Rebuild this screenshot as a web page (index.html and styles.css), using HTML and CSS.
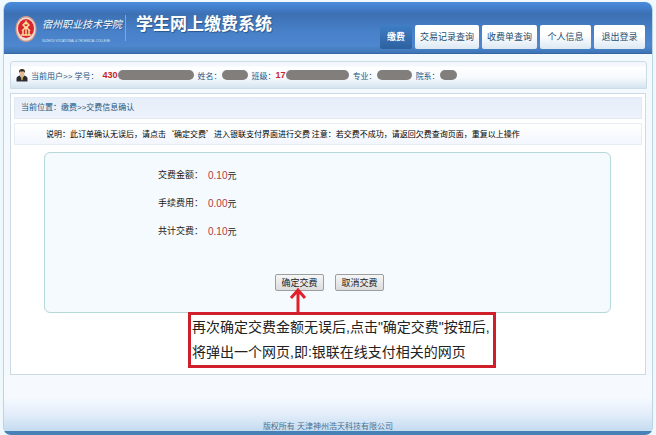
FILE: index.html
```html
<!DOCTYPE html>
<html lang="zh-CN">
<head>
    <meta charset="UTF-8">
    <meta name="viewport" content="width=device-width, initial-scale=1.0">
    <title>学生网上缴费系统</title>
    <link rel="stylesheet" href="styles.css">
</head>
<body>
    <div class="shell">
        <header class="header">
            <svg class="logo" viewBox="0 0 44 54" aria-hidden="true">
                <ellipse cx="22" cy="27" rx="21" ry="26" fill="#cf9a8c"/>
                <ellipse cx="22" cy="27" rx="19" ry="23" fill="#f0dcd2"/>
                <ellipse cx="22" cy="26" rx="16" ry="19" fill="#d9262c"/>
                <path d="M22 10v8M15 20l7-7 7 7M17 19l5 8 5-8M14 31l8-8 8 8M22 24v14M16 29v9M28 29v9M11 39h22" fill="none" stroke="#fbdc9a" stroke-width="3"/>
            </svg>
            <div class="school">
                <span class="school-name">宿州职业技术学院</span>
                <span class="school-en">SUZHOU VOCATIONAL &amp; TECHNICAL COLLEGE</span>
            </div>
            <h1>学生网上缴费系统</h1>
            <nav class="nav">
                <a class="active" href="#">缴费</a>
                <a href="#">交易记录查询</a>
                <a href="#">收费单查询</a>
                <a href="#">个人信息</a>
                <a href="#">退出登录</a>
            </nav>
        </header>

        <div class="userbar">
            <svg class="avatar" viewBox="0 0 24 26" aria-hidden="true">
                <path d="M1 25v-6q0-4 7-6h8q7 2 7 6v6z" fill="#2b2b30"/>
                <path d="M8 13l4 9 4-9z" fill="#fff"/>
                <path d="M11 14h2l1 7-2 2-2-2z" fill="#b2902e"/>
                <ellipse cx="12" cy="8" rx="5" ry="6" fill="#e3b98d"/>
                <path d="M6 8q-1-8 6-8t6 8l-2-3H8z" fill="#3a2c20"/>
            </svg>
            <span class="who">当前用户&gt;&gt; 学号：</span>
            <b>430</b><i class="mask mask-id"></i>
            <span>姓名：</span><i class="mask mask-name"></i>
            <span>班级：</span><b>17</b><i class="mask mask-class"></i>
            <span>专业：</span><i class="mask mask-major"></i>
            <span>院系：</span><i class="mask mask-dept"></i>
        </div>

        <main class="content">
            <div class="crumb">当前位置：缴费&gt;&gt;交费信息确认</div>
            <p class="notice">说明：此订单确认无误后，请点击‘确定交费’进入银联支付界面进行交费 注意：若交费不成功，请返回欠费查询页面，重复以上操作</p>
            <form class="order">
                <dl>
                    <dt>交费金额：</dt><dd><em>0.10</em>元</dd>
                    <dt>手续费用：</dt><dd><em>0.00</em>元</dd>
                    <dt>共计交费：</dt><dd><em>0.10</em>元</dd>
                </dl>
                <div class="actions">
                    <div class="confirm">
                        <button type="button">确定交费</button>
                        <svg class="arrow" viewBox="0 0 18 26" aria-hidden="true">
                            <path d="M9 26V3M2 11l7-8 7 8" fill="none" stroke="#e0202c" stroke-width="3"/>
                        </svg>
                    </div>
                    <button type="button">取消交费</button>
                </div>
            </form>
            <div class="tip">再次确定交费金额无误后,点击"确定交费"按钮后,<br>将弹出一个网页,即:银联在线支付相关的网页</div>
        </main>

        <footer class="footer">版权所有 天津神州浩天科技有限公司</footer>
    </div>
</body>
</html>
```

FILE: styles.css
```css
* { box-sizing: border-box; }
body {
    margin: 0;
    padding: 2px 3px 0;
    min-height: 100vh;
    display: flex;
    background: #eff8fc;
    font-family: "Liberation Sans", "Noto Sans CJK SC", sans-serif;
    font-size: 8px;
    color: #222;
}
.shell {
    flex: 1;
    display: flex;
    flex-direction: column;
    border: 1px solid #b9d5e2;
    border-top: 0;
    border-bottom: 4px solid #4681b8;
    border-radius: 8px;
    background: #f4f9fe;
}

/* header */
.header {
    display: flex;
    align-items: flex-start;
    height: 52px;
    padding-left: 11px;
    padding-right: 7px;
    border-radius: 7px 7px 0 0;
    border-bottom: 1px solid #3567a4;
    background: linear-gradient(#4b8cdb 0, #4381cf 5px, #3c70b3 12px, #4881c9 30px, #4e87ce 44px, #3c72b3 52px);
}
.logo { width: 22px; height: 28px; margin-top: 13px; }
.school {
    display: flex;
    flex-direction: column;
    width: 89px;
    height: 26px;
    margin-top: 13px;
    padding-left: 5px;
    border-right: 1px solid #7aa8df;
    color: #fff;
    white-space: nowrap;
}
.school-name { font-size: 10px; line-height: 20px; font-style: italic; text-shadow: 1px 1px 1px #2b5688; }
.school-en { font-size: 3px; line-height: 12px; color: #dbe9f8; }
h1 {
    margin: 10px 0 0 10px;
    font-size: 17px;
    line-height: 26px;
    color: #fff;
    text-shadow: 1px 1px 1px #2b5688;
    white-space: nowrap;
}
.nav { display: flex; gap: 3px; margin-top: 23px; margin-left: auto; }
.nav a {
    min-width: 51px;
    height: 24px;
    padding: 0 5px;
    border-radius: 2px;
    background: linear-gradient(#fff 40%, #dce8f3);
    font-size: 9px;
    line-height: 25px;
    color: #244f70;
    text-align: center;
    text-decoration: none;
    white-space: nowrap;
}
.nav .active { min-width: 32px; background: linear-gradient(#3e7ec5, #2d619f); color: #fff; font-weight: bold; }

/* user bar */
.userbar {
    display: flex;
    align-items: center;
    height: 28px;
    margin: 7px 5px 0 6px;
    padding-left: 5px;
    border: 1px solid #cbdce8;
    border-radius: 3px 3px 0 0;
    background: linear-gradient(#f4f8fc 4px, #fff 5px, #f6f9fd 16px, #d5e4f0);
    color: #24557e;
    white-space: nowrap;
}
.userbar b { font-size: 9px; color: #c81f28; }
.avatar { width: 12px; height: 13px; margin-right: 3px; }
.who { margin-right: 4px; }
.mask { height: 10px; margin-right: 4px; border-radius: 5px; background: #817e7c; }
.mask-id { width: 76px; }
.mask-name { width: 26px; }
.mask-class { width: 63px; }
.mask-major { width: 35px; }
.mask-dept { width: 17px; }

/* content */
.content {
    margin: 4px 6px 0;
    padding: 3px;
    height: 282px;
    border: 1px solid #cddae4;
    background: #fff;
}
.crumb {
    padding-left: 6px;
    border: 1px solid #e2eaf3;
    background: linear-gradient(#e6eef9, #edf2fb);
    color: #24557e;
    line-height: 20px;
}
.notice {
    margin: 4px 0 0;
    padding-left: 31px;
    border: 1px solid #e6edf5;
    background: linear-gradient(#fff, #f2f6fd);
    font-family: "Noto Sans CJK SC", sans-serif;
    line-height: 20px;
    color: #000;
    white-space: nowrap;
}
.order {
    margin: 7px 31px 0 30px;
    height: 161px;
    border: 1px solid #b5d8d8;
    border-radius: 6px;
    background: #f5fafe;
}
.order dl {
    display: grid;
    grid-template-columns: 50px 1fr;
    row-gap: 14px;
    margin: 0;
    padding: 16px 0 0 113px;
    font-size: 9px;
    line-height: 13px;
}
.order dd { margin: 0; }
.order em { font-size: 10px; font-style: normal; color: #b43a40; }
.actions { display: flex; gap: 11px; margin: 35px 0 0 230px; }
.actions button {
    display: block;
    width: 49px;
    height: 17px;
    padding: 0;
    border: 1px solid #9c9ea0;
    border-radius: 2px;
    background: linear-gradient(#f6f6f6, #dcdcdc);
    font: inherit;
    font-size: 9px;
    line-height: 14px;
    color: #222;
}

/* annotation */
.confirm { position: relative; }
.arrow { position: absolute; top: 13px; left: 14px; width: 18px; height: 26px; }
.tip {
    position: relative;
    width: fit-content;
    margin-top: -1px;
    margin-left: 174px;
    padding: 0 3px 0 1px;
    border: 3px solid #cf1f2b;
    background: #fff;
    font-size: 14px;
    line-height: 25px;
    color: #222;
    white-space: nowrap;
}

.footer {
    flex: 1;
    display: flex;
    align-items: flex-end;
    justify-content: center;
    background: linear-gradient(#f6faff 40%, #e3edfa 70%, #c4dcef);
    color: #4b7194;
}
```
